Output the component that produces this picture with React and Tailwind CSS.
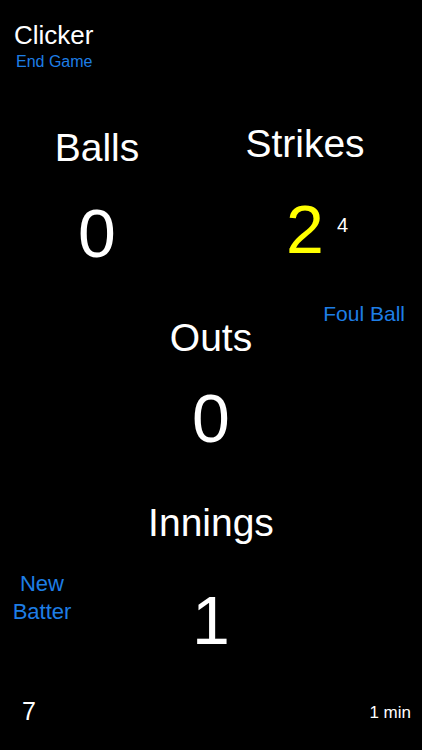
// Clicker — baseball ball/strike counter screen
export default function App() {
  return (
    <div className="w-[422px] h-[750px] bg-black text-white font-['Liberation_Sans',Arial,sans-serif] flex flex-col overflow-hidden">
      {/* header */}
      <div className="pt-[22px] pl-[14px]">
        <div className="text-[26px] leading-none">Clicker</div>
        <button className="block mt-[6px] pl-[2px] text-[16px] leading-none text-[#1e7ee6]">End Game</button>
      </div>

      {/* balls / strikes */}
      <div className="flex mt-[54px]">
        <div className="w-[194px] flex flex-col items-center pt-[4px]">
          <div className="text-[39px] leading-none">Balls</div>
          <div className="mt-[32px] text-[68px] leading-none">0</div>
        </div>
        <div className="w-[222px] flex flex-col items-center">
          <div className="text-[39px] leading-none">Strikes</div>
          <div className="relative mt-[32px] text-[68px] leading-none text-[#ffff00]">
            2
            <span className="absolute left-full top-[20px] ml-[13px] text-[20px] leading-none text-white">4</span>
          </div>
        </div>
      </div>

      {/* outs */}
      <div className="grid grid-cols-[1fr_auto_1fr] mt-[36px]">
        <div />
        <div className="flex flex-col items-center pt-[15px]">
          <div className="text-[39px] leading-none">Outs</div>
          <div className="mt-[27px] text-[68px] leading-none">0</div>
        </div>
        <div className="flex justify-end items-start pr-[17px]">
          <button className="text-[21px] leading-none text-[#1e7ee6]">Foul Ball</button>
        </div>
      </div>

      {/* innings */}
      <div className="mt-[51px] text-center text-[39px] leading-none">Innings</div>

      <div className="grid grid-cols-[1fr_auto_1fr] mt-[28px]">
        <div>
          <button className="w-[84px] text-center text-[22px] leading-[28px] text-[#1e7ee6]">
            New<br />Batter
          </button>
        </div>
        <div className="pt-[16px] text-[68px] leading-none">1</div>
        <div />
      </div>

      {/* footer */}
      <div className="flex justify-between items-start mt-[45px] pl-[22px] pr-[11px]">
        <div className="text-[25px] leading-none">7</div>
        <div className="mt-[5px] text-[17px] leading-none">1 min</div>
      </div>
    </div>
  )
}
